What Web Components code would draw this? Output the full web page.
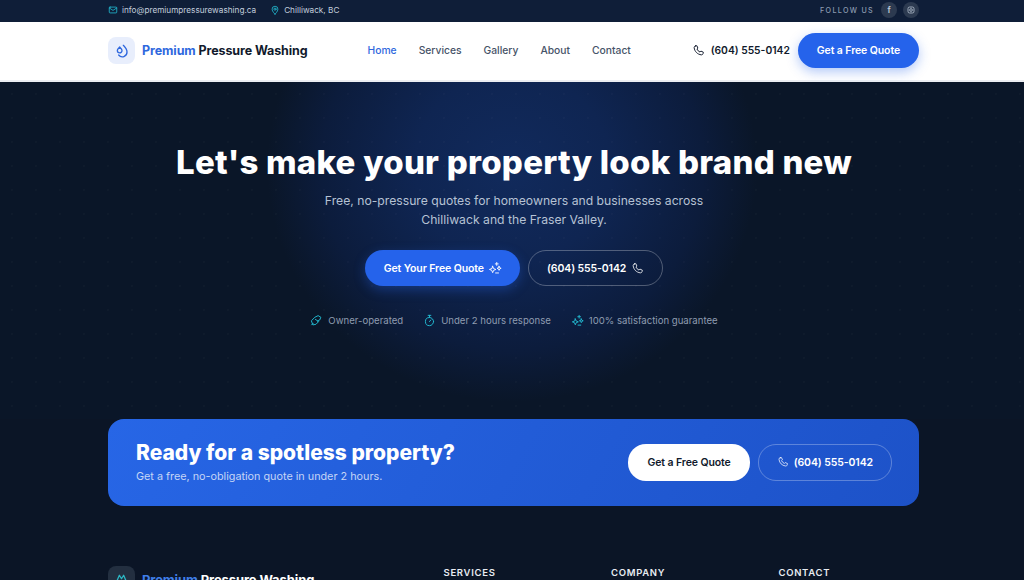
<!DOCTYPE html>
<html lang="en">
<head>
<meta charset="utf-8">
<title>Premium Pressure Washing</title>
<style>
  html, body { margin: 0; height: 580px; overflow: hidden; background: #0b1526; font-family: Inter, "Liberation Sans", sans-serif; }
</style>
</head>
<body>
<pw-topbar></pw-topbar>
<pw-header></pw-header>
<pw-hero></pw-hero>
<pw-cta></pw-cta>
<pw-footer></pw-footer>

<script>
const ICONS = {
  mail: '<rect x="3" y="5" width="18" height="14" rx="2"/><path d="M3 7l9 6 9-6"/>',
  pin: '<path d="M12 22s7-6.500 7-12a7 7 0 0 0-14 0c0 5.500 7 12 7 12z"/><circle cx="12" cy="10" r="2.600"/>',
  phone: '<path d="M6.500 3.500l2.400-.4 2 4.400-1.800 1.700a11 11 0 0 0 5.700 5.700l1.700-1.800 4.400 2-.4 2.400c-.3 1.600-1.700 2.700-3.300 2.500C10.200 19.300 4.700 13.800 4 6.800 3.800 5.200 4.900 3.800 6.500 3.500z"/>',
  drops: '<path d="M8.500 6c2 2 3.500 3.500 3.500 5.300a3.500 3.500 0 0 1-7 0C5 9.500 6.500 8 8.500 6z"/><path d="M14 3.500c3 3 5.500 6 5.500 10a7 7 0 0 1-12.500 4.500"/>',
  sparkle: '<path d="M15 2.500v5M12.500 5h5"/><path d="M8 9l1.600 4 3.900 1.500-3.900 1.500L8 20l-1.600-4-3.900-1.500 3.900-1.500z"/><path d="M19 9l1 2.500 2.500 1-2.500 1-1 2.500-1-2.500-2.500-1 2.500-1z"/><path d="M13 20.500h5"/>',
  timer: '<circle cx="12" cy="14" r="7.500"/><path d="M12 14l2.500-3M9.500 2.500h5M12 2.500v4"/>',
  hand: '<path d="M3 12l6-6 6-3 5 3-2 5-5 2 3 1-5 5-5 1z"/><path d="M3 20l3-3M10 10l3 2"/>',
  peaks: '<path d="M3 20L9 6l3 5 3-5 6 14"/>'
};

function icon(name, size, color, width = 2) {
  return `<svg width="${size}" height="${size}" viewBox="0 0 24 24" fill="none" stroke="${color}" stroke-width="${width}" stroke-linecap="round" stroke-linejoin="round" style="flex:none;display:block">${ICONS[name]}</svg>`;
}

const CONTAINER = 'width: 811px; margin: 0 0 0 108px;';

class PwTopbar extends HTMLElement {
  constructor() {
    super();
    this.attachShadow({ mode: 'open' }).innerHTML = `
      <style>
        :host { display: block; height: 22px; background: #0f1e38; color: #c3cedd; font-size: 8.200px; }
        .inner { ${CONTAINER} height: 20px; display: flex; align-items: center; }
        .item { display: flex; align-items: center; gap: 4px; margin-right: 14px; }
        .follow { margin-left: auto; display: flex; align-items: center; gap: 6px; }
        .label { font-size: 7.200px; font-weight: 500; letter-spacing: 1.300px; color: #8d9bb0; margin-right: 1px; }
        .social { width: 16px; height: 16px; border-radius: 50%; background: #2c3a50; display: flex; align-items: center; justify-content: center; color: #b5c0cf; font-size: 8px; font-weight: 700; }
      </style>
      <div class="inner">
        <span class="item">${icon('mail', 10, '#22b8cf')}info@premiumpressurewashing.ca</span>
        <span class="item">${icon('pin', 10, '#22b8cf')}Chilliwack, BC</span>
        <div class="follow">
          <span class="label">FOLLOW US</span>
          <span class="social">f</span>
          <span class="social"><svg width="8" height="8" viewBox="0 0 24 24" fill="none" stroke="#b5c0cf" stroke-width="2.500"><rect x="3" y="3" width="18" height="18" rx="5"/><circle cx="12" cy="12" r="4"/></svg></span>
        </div>
      </div>
    `;
  }
}

class PwBrand extends HTMLElement {
  constructor() {
    super();
    const dark = this.hasAttribute('dark');
    this.attachShadow({ mode: 'open' }).innerHTML = `
      <style>
        :host { display: flex; align-items: center; gap: 7px; }
        .mark { width: 27px; height: 27px; border-radius: 8px; background: ${dark ? '#232f40' : '#e8eefc'}; display: flex; align-items: center; justify-content: center; }
        .name { font-size: ${dark ? 13 : 12.500}px; font-weight: 700; letter-spacing: -0.100px; color: ${dark ? '#fff' : '#111a2c'}; white-space: nowrap; }
        b { font-weight: 700; color: ${dark ? '#3f7ee8' : '#2f68de'}; }
      </style>
      <span class="mark">${dark ? icon('peaks', 17, '#2bb7c4', 1.800) : icon('drops', 16, '#2f68de', 2)}</span>
      <span class="name"><b>Premium</b> Pressure Washing</span>
    `;
  }
}

class PwButton extends HTMLElement {
  constructor() {
    super();
    this.attachShadow({ mode: 'open' }).innerHTML = `
      <style>
        :host { display: inline-flex; align-items: center; justify-content: center; gap: 5px; height: 36px; box-sizing: border-box; border-radius: 18px; padding: 0 19px; font-size: 10.500px; font-weight: 600; white-space: nowrap; letter-spacing: -0.100px; }
        :host([kind="primary"]) { background: #2563eb; color: #fff; box-shadow: 0 4px 12px rgba(37,99,235,.35); }
        :host([kind="ghost"]) { border: 1px solid rgba(255,255,255,.28); color: #fff; padding: 0 18px; }
        :host([kind="white"]) { background: #fff; color: #111a2c; }
      </style>
      <slot></slot>
    `;
  }
}

class PwHeader extends HTMLElement {
  constructor() {
    super();
    this.attachShadow({ mode: 'open' }).innerHTML = `
      <style>
        :host { display: block; height: 60px; box-sizing: border-box; background: #fff; border-bottom: 2px solid #eceef2; }
        .inner { ${CONTAINER} height: 57px; display: flex; align-items: center; }
        nav { display: flex; gap: 22px; margin: 0 0 1px 60px; font-size: 10.300px; font-weight: 500; color: #465368; }
        .on { color: #2f68de; }
        .phone { margin: 0 8px 1px auto; display: flex; align-items: center; gap: 6px; font-size: 10.300px; font-weight: 600; color: #111a2c; }
        pw-button { height: 35px; }
      </style>
      <div class="inner">
        <pw-brand></pw-brand>
        <nav><span class="on">Home</span><span>Services</span><span>Gallery</span><span>About</span><span>Contact</span></nav>
        <span class="phone">${icon('phone', 13, '#111a2c', 1.800)}(604) 555-0142</span>
        <pw-button kind="primary">Get a Free Quote</pw-button>
      </div>
    `;
  }
}

class PwHero extends HTMLElement {
  constructor() {
    super();
    this.attachShadow({ mode: 'open' }).innerHTML = `
      <style>
        :host { display: block; height: 337px; box-sizing: border-box; padding: 59px 0 0 4px; text-align: center;
          background:
            radial-gradient(circle at center, rgba(255,255,255,.03) 0.5px, transparent 1px) 0 0 / 24px 24px,
            radial-gradient(ellipse 245px 235px at 512px 85px, #112a5c 0%, #0f2552 40%, #0c1c3c 78%, #0a1628 100%),
            #0a1628; }
        h1 { margin: 0; font-size: 33px; line-height: 42px; font-weight: 800; color: #fff; letter-spacing: .25px; }
        p { margin: 8px 0 0; font-size: 12.200px; line-height: 19px; color: #b6c2d4; }
        .actions { margin-top: 21px; display: flex; justify-content: center; gap: 8px; }
        .actions pw-button[kind="primary"] { gap: 4px; padding: 0 18px 0 19px; }
        .perks { margin-top: 28px; display: flex; justify-content: center; gap: 20px; font-size: 9.600px; line-height: 13px; color: #8f9cb0; }
        .perks span { display: flex; align-items: center; gap: 5px; }
      </style>
      <h1>Let's make your property look brand new</h1>
      <p>Free, no-pressure quotes for homeowners and businesses across<br>Chilliwack and the Fraser Valley.</p>
      <div class="actions">
        <pw-button kind="primary">Get Your Free Quote ${icon('sparkle', 14, '#fff', 1.600)}</pw-button>
        <pw-button kind="ghost">(604) 555-0142 ${icon('phone', 13, '#fff', 1.500)}</pw-button>
      </div>
      <div class="perks">
        <span>${icon('hand', 13, '#22b8cf', 1.800)}Owner-operated</span>
        <span>${icon('timer', 13, '#22b8cf', 1.800)}Under 2 hours response</span>
        <span>${icon('sparkle', 13, '#22b8cf', 1.800)}100% satisfaction guarantee</span>
      </div>
    `;
  }
}

class PwCta extends HTMLElement {
  constructor() {
    super();
    this.attachShadow({ mode: 'open' }).innerHTML = `
      <style>
        :host { display: block; background: #0b1526; height: 147px; }
        .card { ${CONTAINER} height: 87px; box-sizing: border-box; padding: 0 27px 1px 28px; border-radius: 16px; background: linear-gradient(120deg, #2766e6, #1d52c8); display: flex; align-items: center; }
        h2 { margin: 0; font-size: 21px; line-height: 26px; font-weight: 800; color: #fff; }
        p { margin: 3px 0 0; font-size: 10.800px; line-height: 16px; color: #c5d5f6; }
        .actions { margin-left: auto; display: flex; gap: 8px; }
        pw-button { height: 37px; }
      </style>
      <div class="card">
        <div>
          <h2>Ready for a spotless property?</h2>
          <p>Get a free, no-obligation quote in under 2 hours.</p>
        </div>
        <div class="actions">
          <pw-button kind="white">Get a Free Quote</pw-button>
          <pw-button kind="ghost">${icon('phone', 12, '#fff', 1.500)}(604) 555-0142</pw-button>
        </div>
      </div>
    `;
  }
}

class PwFooter extends HTMLElement {
  constructor() {
    super();
    this.attachShadow({ mode: 'open' }).innerHTML = `
      <style>
        :host { display: block; background: #0b1526; }
        .inner { ${CONTAINER} display: grid; grid-template-columns: 335.500px 167.500px 167.500px 1fr; }
        h3 { margin: 0; padding-top: 1px; font-size: 9.500px; line-height: 12px; font-weight: 600; letter-spacing: .7px; color: #e8ecf2; }
      </style>
      <div class="inner">
        <pw-brand dark></pw-brand>
        <h3>SERVICES</h3>
        <h3>COMPANY</h3>
        <h3>CONTACT</h3>
      </div>
    `;
  }
}

customElements.define('pw-button', PwButton);
customElements.define('pw-brand', PwBrand);
customElements.define('pw-topbar', PwTopbar);
customElements.define('pw-header', PwHeader);
customElements.define('pw-hero', PwHero);
customElements.define('pw-cta', PwCta);
customElements.define('pw-footer', PwFooter);
</script>
</body>
</html>
